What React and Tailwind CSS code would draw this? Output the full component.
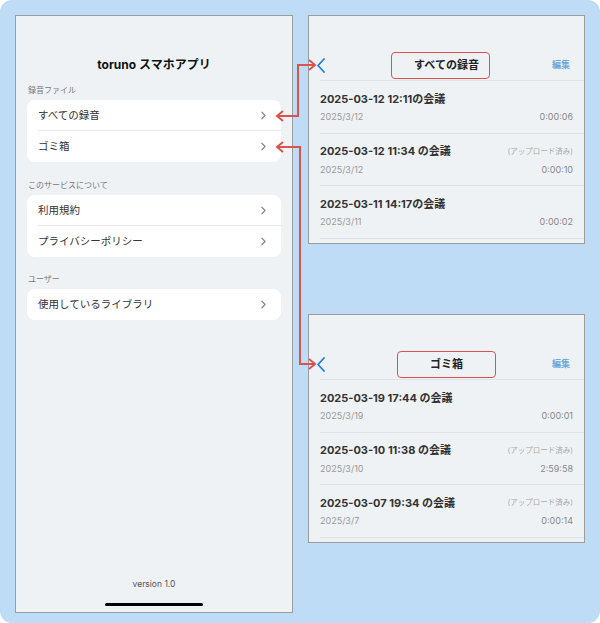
import { ChevronRight } from "lucide-react";

const font = { fontFamily: 'Inter, "Noto Sans CJK JP", sans-serif' };

const allRecordings = [
  { title: "2025-03-12 12:11の会議", date: "2025/3/12", time: "0:00:06", uploaded: false },
  { title: "2025-03-12 11:34 の会議", date: "2025/3/12", time: "0:00:10", uploaded: true },
  { title: "2025-03-11 14:17の会議", date: "2025/3/11", time: "0:00:02", uploaded: false },
];

const trash = [
  { title: "2025-03-19 17:44 の会議", date: "2025/3/19", time: "0:00:01", uploaded: false },
  { title: "2025-03-10 11:38 の会議", date: "2025/3/10", time: "2:59:58", uploaded: true },
  { title: "2025-03-07 19:34 の会議", date: "2025/3/7", time: "0:00:14", uploaded: true },
];

function SectionLabel({ children }) {
  return <p className="px-[12px] text-[8px] leading-[10px] text-[#777]">{children}</p>;
}

function Card({ items }) {
  return (
    <div className="mx-[11px] mt-[5px] bg-white rounded-[8px]">
      {items.map((item, i) => (
        <div key={item} className="pl-[11px]">
          <div
            className={`h-[31px] flex items-center justify-between pr-[11px] ${
              i < items.length - 1 ? "border-b border-[#e6e8eb]" : ""
            }`}
          >
            <span className="text-[10.5px] text-[#333] pt-[1px]">{item}</span>
            <ChevronRight size={13} className="text-[#888]" strokeWidth={2.2} />
          </div>
        </div>
      ))}
    </div>
  );
}

// 録音リスト画面
function ListPanel({ title, boxShift, rows }) {
  return (
    <div className="h-[229px] bg-[#eff2f5] border border-[#9c9c9c] overflow-hidden">
      <div className="mt-[34px] h-[30px] relative flex items-center justify-center">
        <svg className="absolute left-[8px]" width="8" height="15" viewBox="0 0 8 15">
          <path d="M7 1 L1 7.5 L7 14" fill="none" stroke="#1a7ff0" strokeWidth="1.8" strokeLinecap="round" strokeLinejoin="round" />
        </svg>
        <div className="relative h-[27px] w-[99px] flex items-center justify-center">
          <div className={`absolute inset-0 rounded-[4px] border border-[#d9534f] ${boxShift}`} />
          <span className="text-[11px] font-bold text-[#222]">{title}</span>
        </div>
        <span className="absolute right-[14px] text-[9px] font-bold text-[#6aa6dc]">編集</span>
      </div>
      <div className="ml-[11px] border-t border-[#dfe2e6]">
        {rows.map((r) => (
          <div key={r.title} className="h-[52.5px] pr-[11px] pt-[10px] border-b border-[#dfe2e6]">
            <div className="flex items-center justify-between h-[16px]">
              <span className="text-[11px] font-bold text-[#333]">{r.title}</span>
              {r.uploaded && <span className="text-[7.5px] text-[#aaa]">(アップロード済み)</span>}
            </div>
            <div className="flex items-center justify-between mt-[3px] h-[14px]">
              <span className="text-[9px] text-[#999]">{r.date}</span>
              <span className="text-[9px] text-[#888]">{r.time}</span>
            </div>
          </div>
        ))}
      </div>
    </div>
  );
}

function Arrows() {
  const c = "#d9534f";
  return (
    <svg className="absolute inset-0 pointer-events-none" width="600" height="623">
      <g fill="none" stroke={c} strokeWidth="2">
        <path d="M277 116 H298 V65 H315" />
        <path d="M283 111 L277 116 L283 121" />
        <path d="M309 60 L315 65 L309 70" />
        <path d="M277 147 H300 V364 H315" />
        <path d="M283 142 L277 147 L283 152" />
        <path d="M309 359 L315 364 L309 369" />
      </g>
    </svg>
  );
}

export default function App() {
  return (
    <div style={font} className="w-[600px] h-[623px] bg-[#bedcf5] rounded-[12px] relative flex gap-[15px] p-[15px]">
      {/* 左: 設定画面 */}
      <div className="w-[278px] h-[598px] bg-[#eff2f5] border border-[#9c9c9c] flex flex-col">
        <h1 className="mt-[41px] text-center text-[12px] font-bold text-[#111] leading-[16px]">toruno スマホアプリ</h1>
        <div className="mt-[12px]">
          <SectionLabel>録音ファイル</SectionLabel>
          <Card items={["すべての録音", "ゴミ箱"]} />
        </div>
        <div className="mt-[18px]">
          <SectionLabel>このサービスについて</SectionLabel>
          <Card items={["利用規約", "プライバシーポリシー"]} />
        </div>
        <div className="mt-[17px]">
          <SectionLabel>ユーザー</SectionLabel>
          <Card items={["使用しているライブラリ"]} />
        </div>
        <div className="mt-auto mb-[6px] flex flex-col items-center">
          <p className="text-[8.5px] text-[#555]">version 1.0</p>
          <div className="mt-[12px] w-[98px] h-[3px] rounded-full bg-black" />
        </div>
      </div>

      {/* 右: 一覧画面 */}
      <div className="w-[277px] flex flex-col gap-[70px]">
        <ListPanel title="すべての録音" boxShift="-translate-x-[6px]" rows={allRecordings} />
        <ListPanel title="ゴミ箱" boxShift="" rows={trash} />
      </div>

      <Arrows />
    </div>
  );
}
